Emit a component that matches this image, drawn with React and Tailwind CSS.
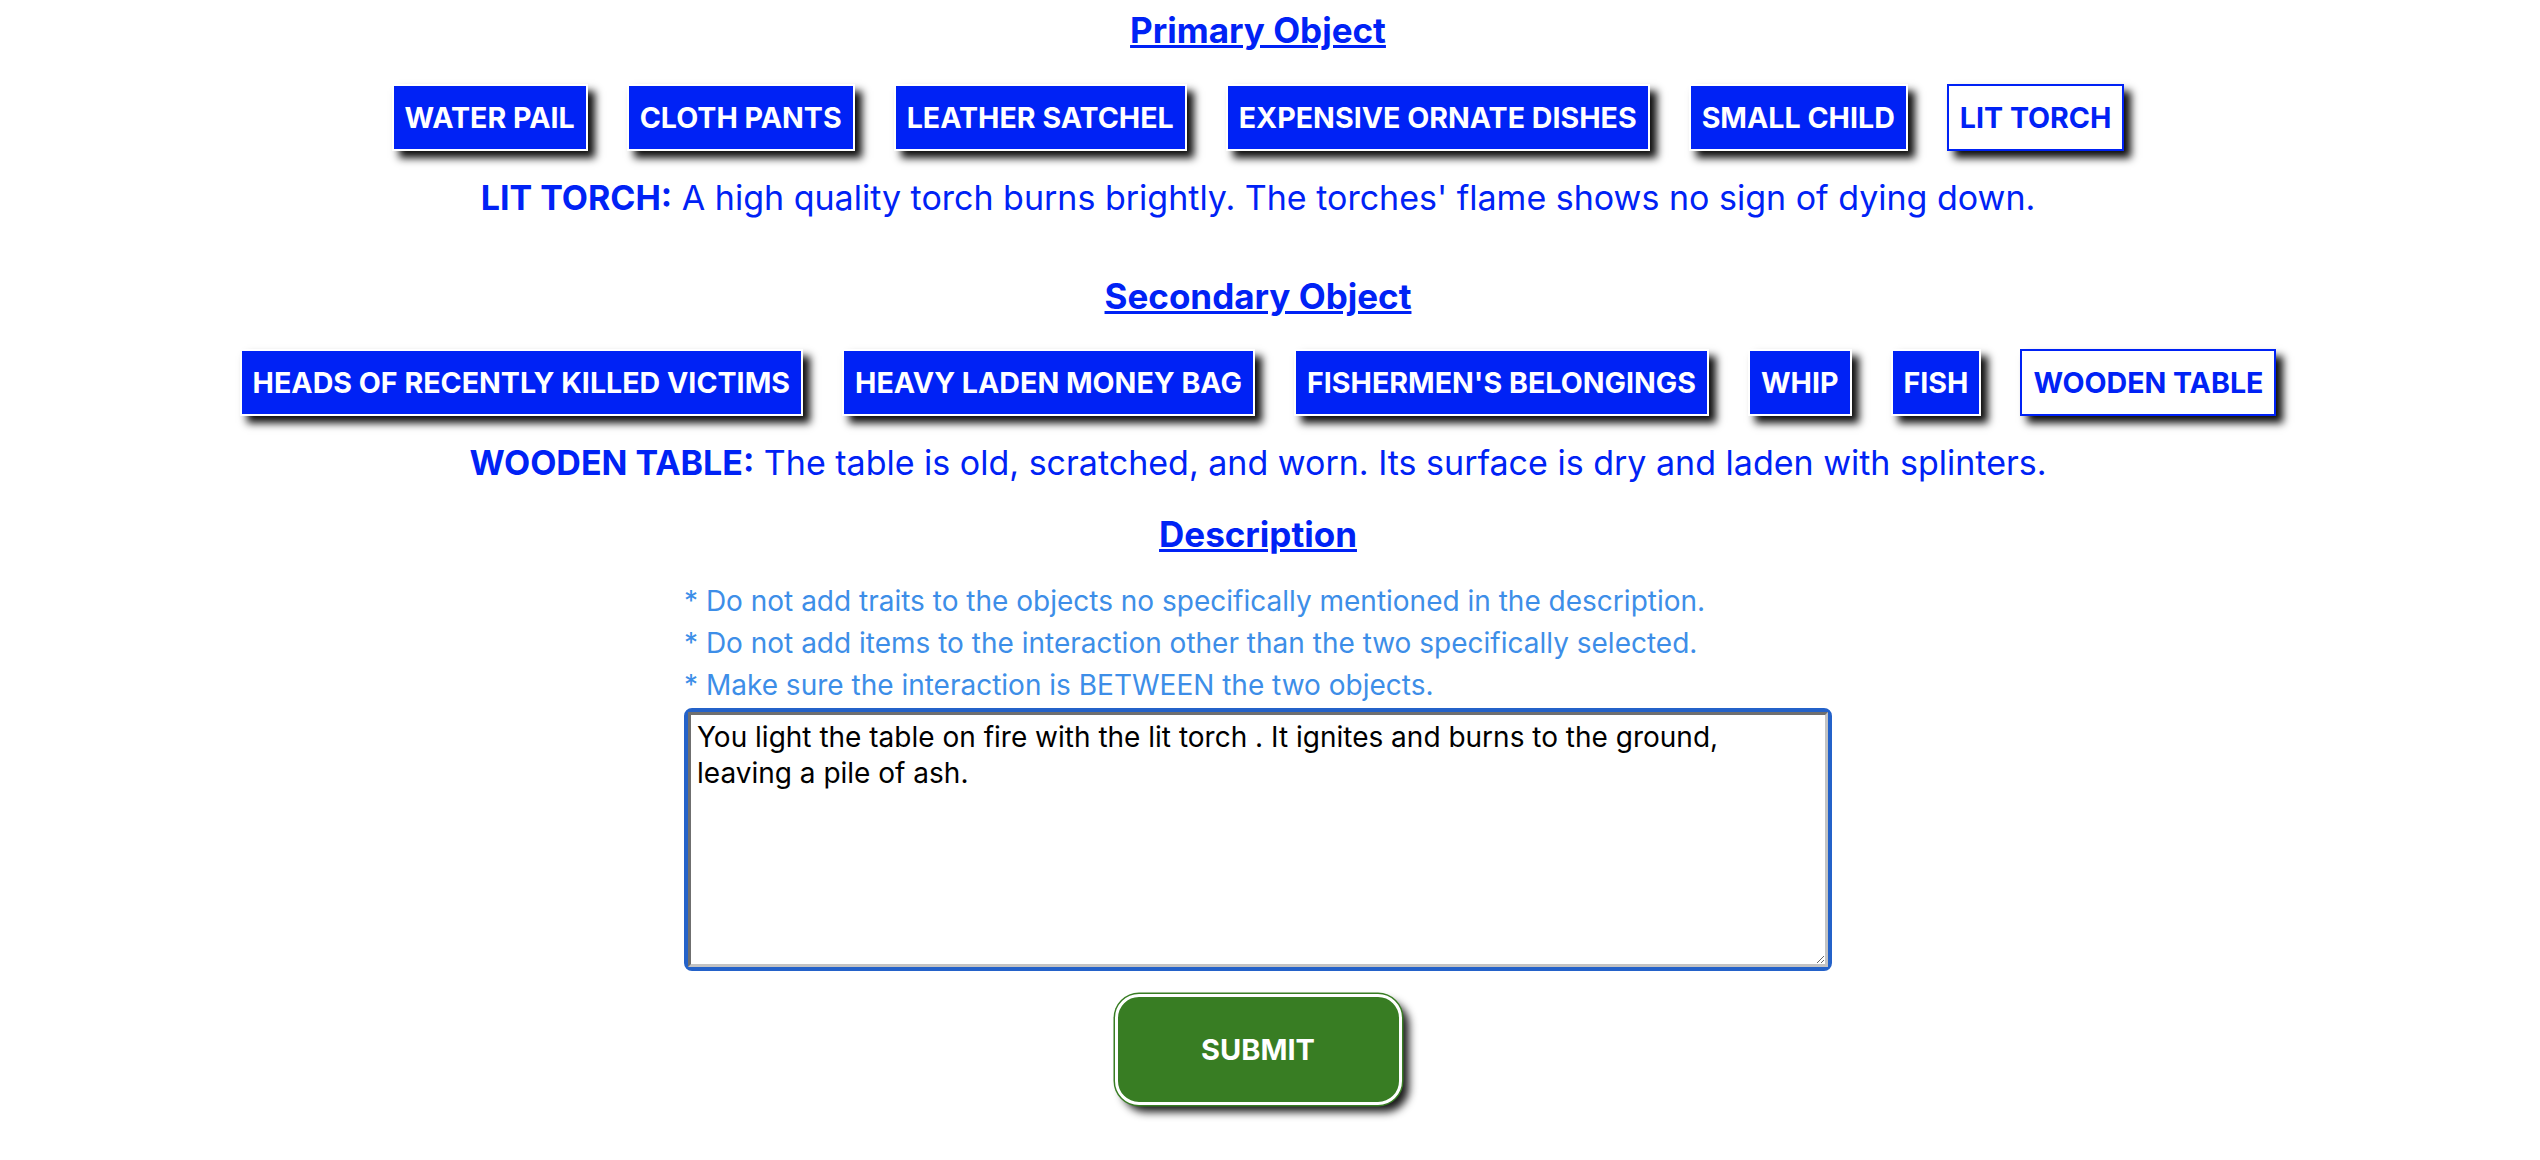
import React from "react";

const primary = ["WATER PAIL", "CLOTH PANTS", "LEATHER SATCHEL", "EXPENSIVE ORNATE DISHES", "SMALL CHILD", "LIT TORCH"];
const secondary = ["HEADS OF RECENTLY KILLED VICTIMS", "HEAVY LADEN MONEY BAG", "FISHERMEN'S BELONGINGS", "WHIP", "FISH", "WOODEN TABLE"];

function ObjButton({ label, selected }) {
  return (
    <button
      className={
        selected
          ? "h-[67px] px-[11px] border-2 border-[#0022f5] bg-white text-[#0022f5] text-[28.6px] leading-[43px] font-bold shadow-[7px_7px_8px_rgba(0,0,0,0.95)]"
          : "h-[67px] px-[11px] border-2 border-white bg-[#0022f5] text-white text-[28.6px] leading-[43px] font-bold shadow-[7px_7px_8px_rgba(0,0,0,0.95)]"
      }
    >
      {label}
    </button>
  );
}

function Heading({ children, className }) {
  return (
    <h3 className={"text-[35px] leading-[41px] font-bold underline text-[#0022f5] " + className}>{children}</h3>
  );
}

export default function App() {
  return (
    <div className="w-[2516px] min-h-[1160px] bg-white font-['Inter',sans-serif] flex flex-col items-center">
      <Heading className="mt-[10px]">Primary Object</Heading>
      <div className="mt-[33px] flex gap-[39px]">
        {primary.map((p) => (
          <ObjButton key={p} label={p} selected={p === "LIT TORCH"} />
        ))}
      </div>
      <p className="mt-[26px] text-[34px] leading-[41px] text-[#0022f5]">
        <span className="font-bold">LIT TORCH:</span> A high quality torch burns brightly. The torches' flame shows no sign of dying down.
      </p>
      <Heading className="mt-[58px]">Secondary Object</Heading>
      <div className="mt-[32px] flex gap-[39px]">
        {secondary.map((p) => (
          <ObjButton key={p} label={p} selected={p === "WOODEN TABLE"} />
        ))}
      </div>
      <p className="mt-[26px] text-[34px] leading-[41px] text-[#0022f5]">
        <span className="font-bold">WOODEN TABLE:</span> The table is old, scratched, and worn. Its surface is dry and laden with splinters.
      </p>
      <Heading className="mt-[31px]">Description</Heading>
      <div className="mt-[25px] w-[1148px] flex flex-col">
        <div className="text-[28px] leading-[42px] text-[#3d8ee8]">
          <p>* Do not add traits to the objects no specifically mentioned in the description.</p>
          <p>* Do not add items to the interaction other than the two specifically selected.</p>
          <p>* Make sure the interaction is BETWEEN the two objects.</p>
        </div>
        <div className="mt-[2px] h-[263px] border-[4px] border-[#2462c9] rounded-[8px] flex">
          <textarea
            className="flex-1 resize border-[3px] border-t-[#6f6f6f] border-l-[#6f6f6f] border-r-[#c3c3c3] border-b-[#c3c3c3] pl-[6px] pr-[20px] pt-[4px] text-[28px] leading-[36px] text-black font-['Inter',sans-serif] outline-none"
            defaultValue={"You light the table on fire with the lit torch . It ignites and burns to the ground, leaving a pile of ash."}
          />
        </div>
      </div>
      <button className="mt-[23px] w-[287px] h-[111px] rounded-[24px] bg-[#387d23] border-[3px] border-white shadow-[0_0_0_1.5px_#387d23,7px_7px_8px_rgba(0,0,0,0.9)] text-white text-[29px] font-bold">
        SUBMIT
      </button>
    </div>
  );
}
